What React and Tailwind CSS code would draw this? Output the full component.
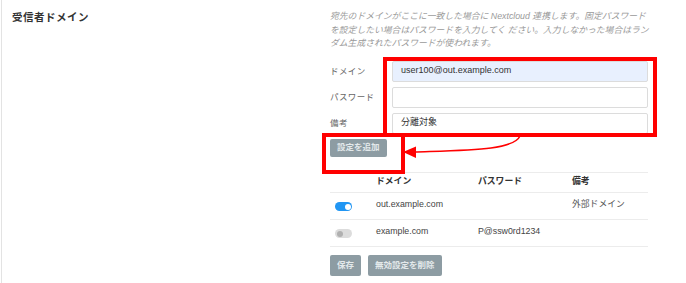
import React from 'react'

const FONT = "font-['Liberation_Sans','Noto_Sans_CJK_JP',sans-serif]"

function Toggle({ on }) {
  return (
    <div
      className={`w-[17px] h-[9px] rounded-full flex items-center px-[1.5px] ${on ? 'bg-[#2196f3] justify-end' : 'bg-[#dcdcdc] justify-start'}`}
    >
      <div className={`w-[6px] h-[6px] rounded-full ${on ? 'bg-white' : 'bg-[#b0b0b0]'}`} />
    </div>
  )
}

const ROWS = [
  { on: true, domain: 'out.example.com', password: '', note: '外部ドメイン' },
  { on: false, domain: 'example.com', password: 'P@ssw0rd1234', note: '' },
]

export default function App() {
  return (
    <div className={`relative w-[686px] h-[283px] bg-white overflow-hidden ${FONT}`}>
      <div className="flex h-full ml-[1px] border-l border-[#e3e3e3]">
        {/* Section title */}
        <div className="w-[328px] pl-[10px] pt-[10px]">
          <h3 className="text-[10.5px] font-bold text-[#333] tracking-[0.5px]">受信者ドメイン</h3>
        </div>

        {/* Settings */}
        <div className="w-[318px] flex flex-col">
          <p className="mt-[10px] text-[8.8px] leading-[13.5px] italic text-[#9a9a9a] whitespace-nowrap">
            宛先のドメインがここに一致した場合に Nextcloud 連携します。固定パスワード<br />
            を設定したい場合はパスワードを入力してく ださい。入力しなかった場合はラン<br />
            ダム生成されたパスワードが使われます。
          </p>

          <div className="mt-[10px] flex flex-col gap-[5px]">
            {[
              { label: 'ドメイン', value: 'user100@out.example.com', filled: true },
              { label: 'パスワード', value: '' },
              { label: '備考', value: '分離対象' },
            ].map((f) => (
              <div key={f.label} className="flex items-center h-[21px]">
                <span className="w-[62px] text-[8.5px] text-[#666] tracking-[0.4px]">{f.label}</span>
                <div
                  className={`flex-1 h-full flex items-center px-[8px] rounded-[2px] border border-[#dcdcdc] text-[9px] text-[#333] ${f.filled ? 'bg-[#e8f0fe]' : 'bg-white'}`}
                >
                  {f.value}
                </div>
              </div>
            ))}
          </div>

          <div className="mt-[5px] flex">
            <button className="h-[18px] px-[7px] rounded-[2px] bg-[#8d9ca3] text-[8.5px] text-[#e3e9eb] font-bold">
              設定を追加
            </button>
          </div>

          {/* Domain table */}
          <div className="mt-[15px] text-[8.8px] text-[#444]">
            <div className="flex items-center h-[21px] border-y border-[#ececec] font-bold text-[#333]">
              <div className="w-[46px]" />
              <div className="w-[102px]">ドメイン</div>
              <div className="w-[94px]">パスワード</div>
              <div className="flex-1">備考</div>
            </div>
            {ROWS.map((r) => (
              <div key={r.domain} className="flex items-center h-[27px] border-b-[1.5px] border-[#ececec]">
                <div className="w-[46px] pl-[5px] pt-[2px]">
                  <Toggle on={r.on} />
                </div>
                <div className="w-[102px] pb-[2px]">{r.domain}</div>
                <div className="w-[94px] pb-[2px]">{r.password}</div>
                <div className="flex-1 pb-[2px] text-[#555]">{r.note}</div>
              </div>
            ))}
          </div>

          <div className="mt-[8px] flex gap-[7px]">
            <button className="h-[21px] px-[7px] rounded-[2px] bg-[#8d9ca3] text-[8.5px] text-[#e3e9eb] font-bold">保存</button>
            <button className="h-[21px] px-[7px] rounded-[2px] bg-[#8d9ca3] text-[8.5px] text-[#e3e9eb] font-bold">無効設定を削除</button>
          </div>
        </div>
      </div>

      {/* Annotation overlays */}
      <div className="absolute left-[383px] top-[57px] w-[274px] h-[80px] border-[4px] border-[#ff0000]" />
      <div className="absolute left-[322px] top-[133px] w-[83px] h-[41px] border-[4px] border-[#ff0000]" />
      <svg className="absolute left-0 top-0" width="686" height="283" viewBox="0 0 686 283">
        <path d="M520 136 C 514 150, 470 150, 414 152" fill="none" stroke="#ff0000" strokeWidth="1.5" />
        <polygon points="403,152 416,146.5 416,158" fill="#ff0000" />
      </svg>
    </div>
  )
}
